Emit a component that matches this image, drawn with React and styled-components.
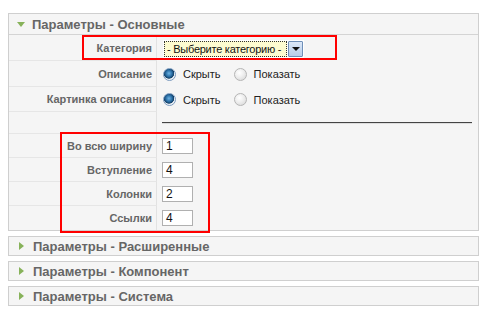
import React from "react";
import styled, { createGlobalStyle } from "styled-components";

const Global = createGlobalStyle`
  html, body { margin: 0; padding: 0; background: #fff; }
  body { font-family: "Liberation Sans", Arial, sans-serif; }
`;

const Page = styled.div`
  position: relative;
  width: 492px;
  height: 327px;
  padding: 13px 0 0 8px;
  box-sizing: border-box;
`;

const Panel = styled.section`
  width: 471px;
  box-sizing: border-box;
  border: 1px solid #cfcfcf;
  background: #f5f5f5;
  margin-top: ${(p) => p.$gap || 0}px;
`;

const PanelHeader = styled.div`
  display: flex;
  align-items: center;
  height: ${(p) => p.$h}px;
  box-sizing: border-box;
  padding-left: 8px;
  gap: 7px;
  border-bottom: ${(p) => (p.$open ? "1px solid #d4d4d4" : "none")};
  font: bold 13px "Liberation Sans", Arial, sans-serif;
  color: #666;
`;

const Arrow = styled.span`
  display: inline-block;
  width: 0;
  height: 0;
  ${(p) =>
    p.$open
      ? `border-left: 4px solid transparent; border-right: 4px solid transparent; border-top: 5px solid #87b25a; margin-top: 1px;`
      : `border-top: 4px solid transparent; border-bottom: 4px solid transparent; border-left: 5px solid #87b25a; margin-left: 2px; margin-right: 2px;`}
`;

const Grid = styled.div`
  display: grid;
  grid-template-columns: 148px 1fr;
`;

const Label = styled.div`
  height: ${(p) => p.$h}px;
  box-sizing: border-box;
  display: flex;
  align-items: center;
  justify-content: flex-end;
  padding-right: 4px;
  border-right: 1px solid #e2e2e2;
  border-bottom: ${(p) => (p.$last ? "none" : "1px solid #e6e6e6")};
  font: bold 11px "Liberation Sans", Arial, sans-serif;
  color: #666;
`;

const Value = styled.div`
  height: ${(p) => p.$h}px;
  box-sizing: border-box;
  display: flex;
  align-items: center;
  padding-left: 5px;
  padding-right: 5px;
  font: 11px "Liberation Sans", Arial, sans-serif;
  color: #222;
`;

const SelectBox = styled.div`
  display: flex;
  align-items: stretch;
  width: 141px;
  height: 18px;
  box-sizing: border-box;
  margin-left: 1px;
  margin-top: 1px;
  padding: 1px;
  background: #fff;
`;

const SelectText = styled.div`
  flex: 1;
  min-width: 0;
  overflow: hidden;
  display: flex;
  align-items: center;
  padding-left: 2px;
  border: 1px dotted #333;
  background: #fdfbd0;
  font: 11px "Liberation Sans", Arial, sans-serif;
  letter-spacing: -0.25px;
  color: #111;
  white-space: nowrap;
`;

const SelectButton = styled.div`
  flex: none;
  width: 15px;
  margin-left: 1px;
  box-sizing: border-box;
  border: 1px solid #6f8fb8;
  border-radius: 1px;
  background: linear-gradient(#dce8f8, #b9cde9);
  display: flex;
  align-items: center;
  justify-content: center;
  &::after {
    content: "";
    border-left: 4px solid transparent;
    border-right: 4px solid transparent;
    border-top: 4px solid #111;
  }
`;

const RadioGroup = styled.div`
  display: flex;
  align-items: center;
`;

const Radio = styled.span`
  display: inline-block;
  width: 13px;
  height: 13px;
  box-sizing: border-box;
  border-radius: 50%;
  border: 1px solid ${(p) => (p.$checked ? "#7c9bbf" : "#b5b5b5")};
  background: ${(p) =>
    p.$checked
      ? "radial-gradient(circle at 45% 40%, #6db3e4 0, #2a6fa6 35%, #123f66 55%, #e9eef3 62%, #fff 100%)"
      : "radial-gradient(circle at 40% 35%, #ffffff 0, #f0f0f0 40%, #d4d4d4 100%)"};
  margin-left: ${(p) => p.$ml}px;
`;

const RadioText = styled.span`
  margin-left: 7px;
  font: 11px "Liberation Sans", Arial, sans-serif;
  color: #222;
`;

const Divider = styled.div`
  flex: 1;
  height: 0;
  border-top: 1px solid #444;
  border-bottom: 1px solid #ddd;
  margin-right: 1px;
`;

const NumInput = styled.div`
  width: 31px;
  height: 16px;
  box-sizing: border-box;
  border: 1px solid #b0b0b0;
  background: #fff;
  padding-left: 3px;
  display: flex;
  align-items: center;
  font: 12px "Liberation Sans", Arial, sans-serif;
  color: #111;
`;

const Highlight = styled.div`
  position: absolute;
  border: 2px solid #f00;
  box-sizing: border-box;
  pointer-events: none;
`;

const rows = [
  { label: "Категория", h: 26, kind: "select" },
  { label: "Описание", h: 26, kind: "radio" },
  { label: "Картинка описания", h: 25, kind: "radio" },
  { label: "", h: 22, kind: "divider" },
  { label: "Во всю ширину", h: 24, kind: "input", value: "1" },
  { label: "Вступление", h: 24, kind: "input", value: "4" },
  { label: "Колонки", h: 24, kind: "input", value: "2" },
  { label: "Ссылки", h: 24, kind: "input", value: "4", last: true },
];

function renderValue(r) {
  if (r.kind === "select")
    return (
      <SelectBox>
        <SelectText>- Выберите категорию -</SelectText>
        <SelectButton />
      </SelectBox>
    );
  if (r.kind === "radio")
    return (
      <RadioGroup>
        <Radio $checked $ml={1} />
        <RadioText>Скрыть</RadioText>
        <Radio $ml={13} />
        <RadioText>Показать</RadioText>
      </RadioGroup>
    );
  if (r.kind === "divider") return <Divider />;
  return <NumInput>{r.value}</NumInput>;
}

const collapsed = ["Параметры - Расширенные", "Параметры - Компонент", "Параметры - Система"];

export default function App() {
  return (
    <>
      <Global />
      <Page>
        <Panel>
          <PanelHeader $open $h={21}>
            <Arrow $open />
            Параметры - Основные
          </PanelHeader>
          <Grid>
            {rows.map((r, i) => (
              <React.Fragment key={i}>
                <Label $h={r.h} $last={r.last}>{r.label}</Label>
                <Value $h={r.h}>{renderValue(r)}</Value>
              </React.Fragment>
            ))}
          </Grid>
        </Panel>
        {collapsed.map((t, i) => (
          <Panel key={t} $gap={i === 0 ? 5 : 5}>
            <PanelHeader $h={18}>
              <Arrow />
              {t}
            </PanelHeader>
          </Panel>
        ))}
        <Highlight style={{ left: 82, top: 35, width: 255, height: 25 }} />
        <Highlight style={{ left: 60, top: 132, width: 150, height: 101 }} />
      </Page>
    </>
  );
}
